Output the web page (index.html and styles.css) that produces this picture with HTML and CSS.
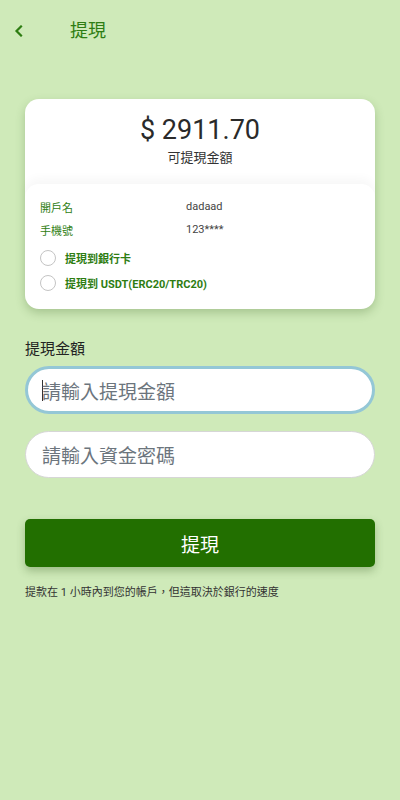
FILE: index.html
```html
<!DOCTYPE html>
<html lang="zh-Hant">
<head>
<meta charset="utf-8">
<meta name="viewport" content="width=device-width, initial-scale=1">
<title>提現</title>
<link rel="stylesheet" href="styles.css">
</head>
<body>
<div class="page">
  <header class="topbar">
    <span class="back">
      <svg width="10" height="12" viewBox="0 0 10 12"><path d="M7 1.5 L2.5 6 L7 10.5" fill="none" stroke="#2e7d12" stroke-width="2.2" stroke-linecap="square"/></svg>
    </span>
    <h1 class="title">提現</h1>
  </header>

  <section class="card">
    <div class="balance">
      <div class="amount">$ 2911.70</div>
      <div class="amount-label">可提現金額</div>
    </div>
    <div class="details">
      <div class="row"><span class="key">開戶名</span><span class="val">dadaad</span></div>
      <div class="row"><span class="key">手機號</span><span class="val">123****</span></div>
      <label class="radio first"><span class="circle"></span><span class="rlabel">提現到銀行卡</span></label>
      <label class="radio"><span class="circle"></span><span class="rlabel">提現到 USDT(ERC20/TRC20)</span></label>
    </div>
  </section>

  <div class="field-label">提現金額</div>
  <div class="input focused"><span class="caret"></span><span class="ph">請輸入提現金額</span></div>
  <div class="input second"><span class="ph">請輸入資金密碼</span></div>

  <button class="submit">提現</button>
  <p class="note">提款在 1 小時內到您的帳戶，但這取決於銀行的速度</p>
</div>
</body>
</html>
```

FILE: styles.css
```css
html, body {
  margin: 0;
  padding: 0;
  background: #cfeab9;
}
body {
  font-family: Roboto, "Noto Sans CJK TC", sans-serif;
  color: #222;
}
.page {
  width: 400px;
  min-height: 800px;
  box-sizing: border-box;
  padding: 0 25px;
}
.topbar {
  height: 62px;
  display: flex;
  align-items: center;
  margin-left: -11px;
}
.back {
  width: 10px;
  height: 12px;
  display: flex;
  margin-right: 46px;
}
.title {
  margin: 0;
  font-size: 18px;
  font-weight: 400;
  color: #2e7d12;
  line-height: 1;
}
.card {
  margin-top: 37px;
  background: #fff;
  border-radius: 14px;
  box-shadow: 0 4px 10px rgba(60, 100, 40, 0.28);
}
.balance {
  text-align: center;
  padding-top: 13px;
  height: 72px;
}
.amount {
  font-size: 27px;
  line-height: 36px;
  color: #2a2a2a;
}
.amount-label {
  font-size: 13px;
  line-height: 18px;
  margin-top: 1px;
  color: #333;
}
.details {
  border-radius: 14px;
  box-shadow: 0 -6px 10px rgba(0, 0, 0, 0.03);
  padding: 11px 0 14px 0;
}
.row {
  display: flex;
  height: 23px;
  align-items: center;
  font-size: 11px;
}
.key {
  width: 161px;
  padding-left: 15px;
  box-sizing: border-box;
  color: #2e7d12;
}
.val {
  color: #444;
}
.radio {
  display: flex;
  align-items: center;
  height: 25px;
  padding-left: 15px;
}
.radio.first {
  margin-top: 4px;
}
.circle {
  width: 14px;
  height: 14px;
  border: 1px solid #c4c4c4;
  border-radius: 50%;
  margin-right: 9px;
  background: #fff;
}
.rlabel {
  font-size: 11px;
  font-weight: 700;
  color: #2e7d12;
}
.field-label {
  margin-top: 30px;
  font-size: 15px;
  line-height: 20px;
  color: #222;
}
.input {
  margin-top: 7px;
  height: 48px;
  box-sizing: border-box;
  border: 1px solid #d6d6d6;
  border-radius: 24px;
  background: #fff;
  display: flex;
  align-items: center;
  padding-left: 16px;
}
.input.second {
  margin-top: 17px;
  height: 47px;
}
.input.focused {
  border: 3px solid #94c7d6;
  padding-left: 14px;
}
.caret {
  width: 1px;
  height: 21px;
  background: #333;
  margin-right: -1px;
}
.ph {
  font-size: 19px;
  color: #6c757d;
}
.submit {
  display: block;
  width: 100%;
  margin-top: 41px;
  height: 48px;
  border: 0;
  border-radius: 5px;
  background: #226f00;
  color: #fff;
  font-family: Roboto, "Noto Sans CJK TC", sans-serif;
  font-size: 19px;
  box-shadow: 0 4px 8px rgba(40, 80, 20, 0.3);
}
.note {
  margin: 16px 0 0 0;
  font-size: 11px;
  color: #333;
}
```
